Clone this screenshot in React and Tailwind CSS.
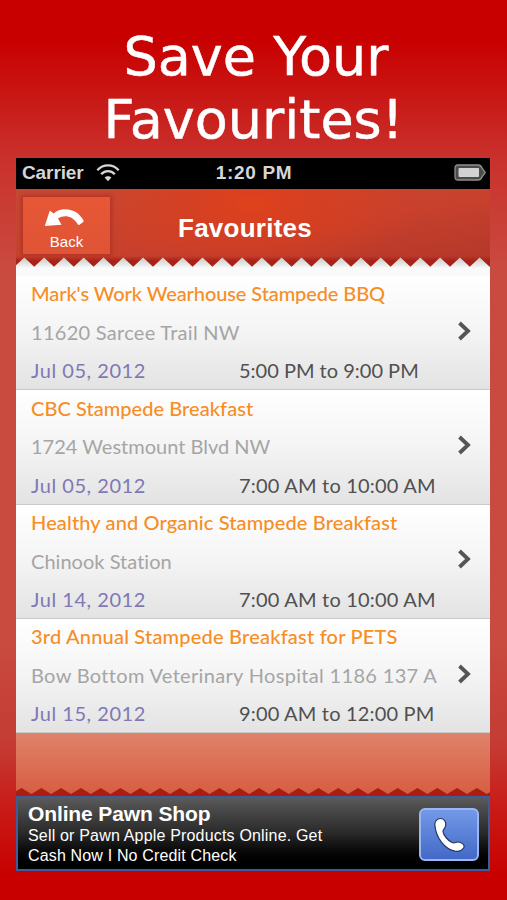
const events = [
  {
    title: "Mark's Work Wearhouse Stampede BBQ",
    place: "11620 Sarcee Trail NW",
    date: "Jul 05, 2012",
    time: "5:00 PM to 9:00 PM",
    tracking: ["tracking-[-0.1px]", "tracking-[0.28px]", "tracking-normal"],
  },
  {
    title: "CBC Stampede Breakfast",
    place: "1724 Westmount Blvd NW",
    date: "Jul 05, 2012",
    time: "7:00 AM to 10:00 AM",
    tracking: ["tracking-[0.05px]", "tracking-normal", "tracking-[0.2px]"],
  },
  {
    title: "Healthy and Organic Stampede Breakfast",
    place: "Chinook Station",
    date: "Jul 14, 2012",
    time: "7:00 AM to 10:00 AM",
    tracking: ["tracking-[0.13px]", "tracking-[0.03px]", "tracking-[0.2px]"],
  },
  {
    title: "3rd Annual Stampede Breakfast for PETS",
    place: "Bow Bottom Veterinary Hospital 1186 137 A",
    date: "Jul 15, 2012",
    time: "9:00 AM to 12:00 PM",
    tracking: ["tracking-[0.2px]", "tracking-[0.33px]", "tracking-[0.17px]"],
  },
];

const TOOTH = 19.8;

// zigzag edge, closed along the bottom of the strip
function zigzag(first, top, valley, bottom) {
  const pts = [];
  for (let i = -1; i < 26; i++) {
    const x = first + i * TOOTH;
    pts.push(`${x.toFixed(1)},${top}`, `${(x + TOOTH / 2).toFixed(1)},${valley}`);
  }
  return `-30,${bottom} ${pts.join(" ")} 520,${bottom}`;
}

function StatusBar() {
  return (
    <div className="flex h-[31px] items-center bg-black pr-[4px] pb-[2px] pl-[6px] text-[#d6d6d6]">
      <div className="flex flex-1 items-center gap-[12px]">
        <span className="text-[19px] leading-none font-bold tracking-[-0.1px]">Carrier</span>
        <svg width="24" height="18" viewBox="0 0 24 18" fill="none" stroke="currentColor" strokeWidth="2.3">
          <path d="M1.3 6.3C7.2-.2 16.8-.2 22.7 6.3" />
          <path d="M5.2 10.2c3.8-4.1 9.8-4.1 13.6 0" />
          <path d="M12 17.2l-3.4-3.600c1.800-1.900 5-1.900 6.800 0z" fill="currentColor" stroke="none" />
        </svg>
      </div>
      <span className="text-[19px] leading-none font-bold tracking-[0.7px]">1:20 PM</span>
      <div className="flex flex-1 justify-end">
        <svg width="32" height="17" viewBox="0 0 32 17">
          <path d="M4 1h20q3 0 4 3l3.2 4.5L28 13q-1 3-4 3H4q-3 0-3-3V4q0-3 3-3z" fill="#4b4b4b" stroke="#8f8f8f" strokeWidth="1.3" />
          <rect x="4.5" y="4" width="20.5" height="9" rx="1" fill="#d2d2d2" />
        </svg>
      </div>
    </div>
  );
}

function NavBar() {
  return (
    <div className="relative h-[79px] bg-[radial-gradient(ellipse_170px_70px_at_50%_18%,#df411c_0%,rgba(218,62,30,0.7)_40%,rgba(208,60,40,0)_100%),linear-gradient(172deg,#c64934_0%,#c8412d_50%,#b23629_100%)]">
      <div className="flex h-[69px] items-center">
        <button
          type="button"
          className="mt-[4px] ml-[7px] flex h-[57px] w-[87px] flex-col items-center bg-linear-to-b from-[#e75735] to-[#df5435] pt-[12px] text-white shadow-[0_0_4px_2px_#b23426]"
        >
          <svg className="mr-[5px]" width="40" height="18" viewBox="0 0 40 18" fill="currentColor">
            <path d="M.8 17L5.8 1.500L9.500 4.600C17-2.500 32.500-1.200 39.300 11Q40 12.500 38.500 13.600L35.500 15.800Q34.500 16.500 33.500 15C28.500 7 20.500 5.500 14 9.500L17.500 15.800z" />
          </svg>
          <span className="mt-[6px] text-[15px] leading-[17px]">Back</span>
        </button>
        <h1 className="mt-[9px] ml-[68px] text-[26px] leading-none font-bold tracking-[0.25px] text-white">Favourites</h1>
      </div>
      <svg className="absolute bottom-0 left-0" width="474" height="12" viewBox="0 0 474 12">
        <defs>
          <linearGradient id="paper" x1="0" y1="0" x2="0" y2="1">
            <stop offset="0" stopColor="#c5cac7" />
            <stop offset="0.8" stopColor="#eef0ed" />
            <stop offset="1" stopColor="#fafafa" />
          </linearGradient>
          <linearGradient id="fold" x1="0" y1="0" x2="0" y2="1">
            <stop offset="0" stopColor="#a82219" stopOpacity="0" />
            <stop offset="0.4" stopColor="#a82219" />
          </linearGradient>
        </defs>
        <rect width="474" height="12" fill="url(#fold)" />
        <polygon points={zigzag(8.3, 1.5, 10.8, 12)} fill="url(#paper)" />
      </svg>
    </div>
  );
}

function EventRow({ event }) {
  const [titleGap, placeGap, timeGap] = event.tracking;

  return (
    <li className="flex h-[114.33px] items-center border-b border-[#c9c9c9] bg-linear-to-b from-white via-[#f4f4f4] to-[#e3e3e3] pr-[19px] pl-[15px] font-['Lato','Noto_Sans',sans-serif] text-[20px] leading-[38.5px] [font-variant-ligatures:none]">
      <div className="-mt-[1px] min-w-0 flex-1 whitespace-nowrap">
        <p className={`font-medium text-[#f78d25] ${titleGap}`}>{event.title}</p>
        <p className={`text-[#a5a5a5] ${placeGap}`}>{event.place}</p>
        <div className="flex">
          <p className="w-[208px] tracking-[0.53px] text-[#7f78b4]">{event.date}</p>
          <p className={`text-[#505050] ${timeGap}`}>{event.time}</p>
        </div>
      </div>
      <svg className="-mt-[4px]" width="13" height="20" viewBox="0 0 13 20" fill="none" stroke="#555" strokeWidth="3.8">
        <path d="M1.5 2L10 10l-8.5 8" />
      </svg>
    </li>
  );
}

function AdBanner() {
  return (
    <div className="flex h-[75px] items-center justify-between border-2 border-[#3d5c9c] bg-linear-to-b from-[#5a5a5a] via-[#292929] to-black pr-[9px] pl-[10px] text-white">
      <div>
        <p className="text-[21px] leading-[25px] font-bold tracking-[-0.12px]">Online Pawn Shop</p>
        <p className="text-[16px] leading-[20.5px] tracking-[0.18px]">Sell or Pawn Apple Products Online. Get</p>
        <p className="text-[16px] leading-[20.5px] tracking-[0.16px]">Cash Now I No Credit Check</p>
      </div>
      <div className="mt-[2px] flex h-[53px] w-[60px] items-center justify-center rounded-[6px] border-2 border-[#9bb6f0] bg-linear-to-b from-[#7499e8] to-[#4269c6]">
        <svg width="32" height="36" viewBox="0 0 32 36">
          <path
            d="M2 9C1 5 4 1.500 7.500 1.500C11.500 1.500 13.500 5.500 12.500 9C12 11.500 10 12.500 10 14.500C10.500 18.500 15 23.500 19 25.500C21.500 26.500 22.500 25 25 25C29 25 32 28 30.800 30.500C29 33.500 26 34.800 22 34.200C12 32 3 21 2 9Z"
            fill="#fff"
            stroke="#26365f"
            strokeWidth="1.2"
          />
        </svg>
      </div>
    </div>
  );
}

export default function App() {
  return (
    <div className="h-[900px] w-[507px] overflow-hidden bg-[linear-gradient(#c80000_0px,#c80000_40px,#c9302b_155px,#c94b40_270px,#c94b40_640px,#c43b33_745px,#c91c18_805px,#c80000_875px)] px-[16px] font-['Liberation_Sans',Arial,sans-serif]">
      <div className="h-[158px] pt-[25px] text-center font-['DejaVu_Sans',sans-serif] text-[54px] leading-[63px] text-white [-webkit-text-stroke:0.5px_white]">
        <p className="ml-[5px]">Save Your</p>
        <p>Favourites!</p>
      </div>
      <div className="w-[474px]">
        <StatusBar />
        <NavBar />
        <div className="h-[8px] bg-[#fafafa]" />
        <ul>
          {events.map((event) => (
            <EventRow key={event.title} event={event} />
          ))}
        </ul>
        <div className="flex h-[63px] flex-col justify-end bg-linear-to-b from-[#df826a] to-[#d65c40]">
          <svg width="474" height="9" viewBox="0 0 474 9">
            <polygon points={zigzag(5.5, 1, 7, 9)} fill="#ab1d11" />
          </svg>
        </div>
        <AdBanner />
      </div>
    </div>
  );
}
